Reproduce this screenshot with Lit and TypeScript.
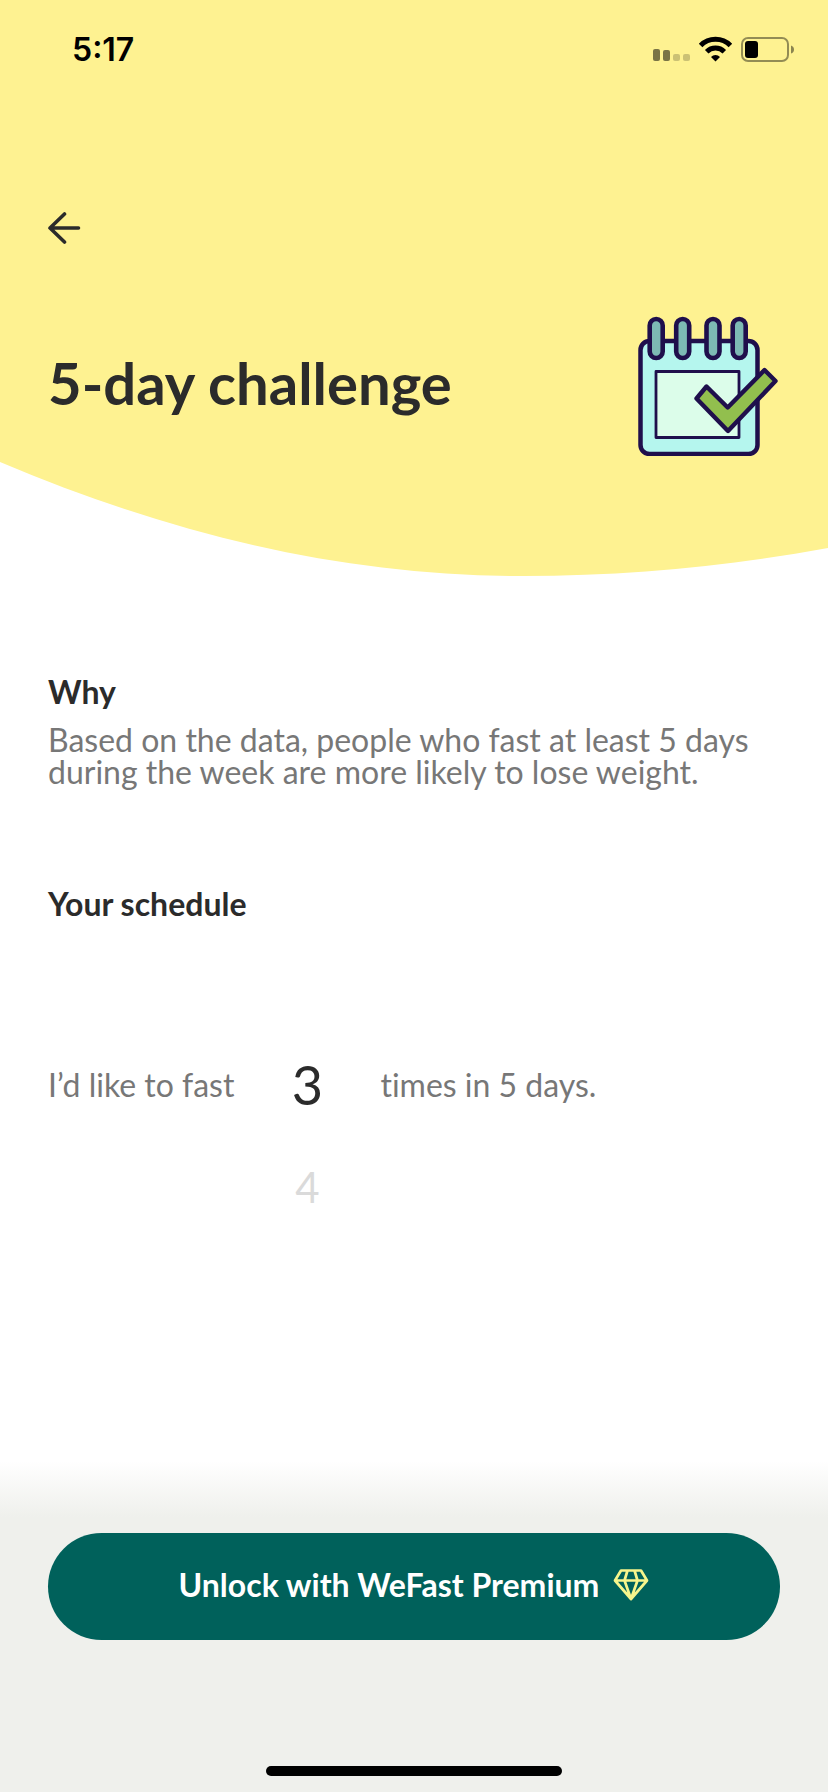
import { LitElement, html, css } from "lit";
import { customElement, state } from "lit/decorators.js";
import { classMap } from "lit/directives/class-map.js";

@customElement("status-bar")
class StatusBar extends LitElement {
  static styles = css`
    :host {
      display: flex;
      justify-content: space-between;
      align-items: center;
      height: 100px;
      padding: 0 34px 0 72px;
      box-sizing: border-box;
    }
    .time {
      font: 600 32px/32px Inter, sans-serif;
      color: #000;
    }
    .icons {
      display: block;
    }
  `;
  render() {
    return html`
      <span class="time">5:17</span>
      <svg class="icons" width="142" height="28" viewBox="0 0 142 28" aria-label="Signal, Wi-Fi and battery" role="img">
        <g fill="#000">
          <rect x="1" y="13" width="7" height="12" rx="2" opacity=".52" />
          <rect x="11" y="14" width="7" height="11" rx="2" opacity=".52" />
          <rect x="21" y="18" width="7" height="7" rx="2" opacity=".2" />
          <rect x="31" y="18" width="7" height="7" rx="2" opacity=".2" />
        </g>
        <g fill="none" stroke="#000" stroke-width="5">
          <path d="M48.600 9.500 A21 21 0 0 1 78.400 9.500" />
          <path d="M54.700 15.700 A12.500 12.500 0 0 1 72.300 15.700" />
        </g>
        <path d="M63.500 25.500 L59 20.900 A6.500 6.500 0 0 1 68 20.900 Z" fill="#000" />
        <rect x="90" y="2" width="46" height="23" rx="6" fill="none" stroke="#000" stroke-opacity=".42" stroke-width="2" />
        <rect x="93" y="5" width="13" height="17" rx="3" fill="#000" />
        <path d="M139 9.500 Q142 10.500 142 13.500 Q142 16.500 139 17.500 Z" fill="#000" opacity=".45" />
      </svg>
    `;
  }
}

@customElement("calendar-art")
class CalendarArt extends LitElement {
  static styles = css`
    :host {
      display: block;
    }
    svg {
      display: block;
    }
  `;
  render() {
    return html`
      <svg width="140" height="140" viewBox="0 0 140 140" aria-hidden="true">
        <g stroke="#1f0f4c" stroke-linejoin="round">
          <rect x="2.500" y="25" width="117" height="113" rx="9" fill="#b5f6ee" stroke-width="4.500" />
          <rect x="18" y="55.500" width="83" height="66" fill="#dcfdea" stroke-width="2.800" />
          <g fill="#7dbab4" stroke-width="4.600">
            <rect x="11.700" y="3" width="13" height="39" rx="6.500" />
            <rect x="38.200" y="3" width="13" height="39" rx="6.500" />
            <rect x="68.500" y="3" width="13" height="39" rx="6.500" />
            <rect x="94.700" y="3" width="13" height="39" rx="6.500" />
          </g>
          <path d="M58.500 82.500 L68.500 70.500 L89.700 91.500 L126.500 54 L137.500 65 L90 115 Z" fill="#92bf4e" stroke-width="4.400" />
        </g>
      </svg>
    `;
  }
}

@customElement("count-wheel")
class CountWheel extends LitElement {
  static styles = css`
    :host {
      display: block;
    }
    .wheel {
      display: grid;
      grid-auto-rows: 102px;
      margin: 0;
      padding: 0;
      border: 0;
      min-width: 0;
    }
    .item {
      display: flex;
      align-items: center;
      justify-content: center;
      font-size: 42px;
      line-height: 60px;
      color: #dadada;
      cursor: pointer;
    }
    .current {
      font-size: 54px;
      color: #2b2b2b;
    }
    .radio {
      appearance: none;
      width: 0;
      height: 0;
      margin: 0;
      outline: none;
    }
  `;

  @state() private value = 3;

  render() {
    return html`
      <fieldset class="wheel" aria-label="Number of fasts">
        ${[3, 4].map(
          (n) => html`
            <label class=${classMap({ item: true, current: n === this.value })}>
              <input
                class="radio"
                type="radio"
                name="count"
                .checked=${n === this.value}
                @change=${() => (this.value = n)}
              />${n}
            </label>
          `
        )}
      </fieldset>
    `;
  }
}

@customElement("app-root")
class AppRoot extends LitElement {
  static styles = css`
    :host {
      display: flex;
      flex-direction: column;
      min-height: 100vh;
      background: #fff;
      color: #2b2b2b;
      font-family: Lato, "Noto Sans", sans-serif;
      font-size: 32px;
      line-height: 32px;
      font-variant-ligatures: none;
    }
    .top {
      background: #fef291;
    }
    .back {
      display: block;
      margin: 104px 0 0 40px;
      padding: 8px;
      border: 0;
      background: none;
      cursor: pointer;
    }
    .back svg {
      display: block;
    }
    .hero {
      display: flex;
      align-items: center;
      justify-content: space-between;
      padding: 64px 50px 6px 48px;
    }
    h1 {
      margin: 0;
      padding-bottom: 6px;
      font-size: 58px;
      line-height: 64px;
      font-weight: 700;
    }
    .curve {
      display: block;
      width: 100%;
      height: 114px;
    }
    main {
      padding: 100px 48px 40px;
    }
    h2 {
      margin: 0;
      font-size: 32px;
      line-height: 32px;
      font-weight: 700;
    }
    .why {
      margin: 16px 0 100px;
      color: #777;
    }
    .schedule {
      display: grid;
      grid-template-columns: auto 146px auto;
      justify-content: start;
      margin-top: 114px;
      color: #777;
    }
    .words {
      display: flex;
      align-items: center;
      height: 102px;
    }
    footer {
      display: flex;
      flex-direction: column;
      margin-top: auto;
      padding: 72px 48px 16px;
      background: linear-gradient(#fff, #eff0ec 56px);
    }
    .unlock {
      display: flex;
      align-items: center;
      justify-content: center;
      gap: 14px;
      height: 107px;
      padding: 0 24px 4px;
      border: 0;
      border-radius: 54px;
      background: #00615b;
      color: #fff;
      font: inherit;
      font-weight: 700;
      cursor: pointer;
    }
    .home {
      align-self: center;
      width: 296px;
      height: 10px;
      margin-top: 126px;
      border-radius: 5px;
      background: #000;
    }
  `;

  render() {
    return html`
      <header>
        <div class="top">
          <status-bar></status-bar>
          <button class="back" aria-label="Back">
            <svg width="33" height="32" viewBox="0 0 33 32">
              <path
                d="M16.500 2 L2 16 L16.500 30 M2 16 H30.500"
                fill="none"
                stroke="#2b2b2b"
                stroke-width="3.600"
                stroke-linecap="round"
                stroke-linejoin="round"
              />
            </svg>
          </button>
          <div class="hero">
            <h1>5-day challenge</h1>
            <calendar-art></calendar-art>
          </div>
        </div>
        <svg class="curve" viewBox="0 0 828 114" preserveAspectRatio="none" aria-hidden="true">
          <path d="M0 0 C180 76 350 114 523 114 C630 114 730 104 828 86 V0 Z" fill="#fef291" />
        </svg>
      </header>
      <main>
        <h2>Why</h2>
        <p class="why">
          Based on the data, people who fast at least 5 days during the week are more likely to lose weight.
        </p>
        <h2>Your schedule</h2>
        <div class="schedule">
          <span class="words">I’d like to fast</span>
          <count-wheel></count-wheel>
          <span class="words">times in 5 days.</span>
        </div>
      </main>
      <footer>
        <button class="unlock">
          Unlock with WeFast Premium
          <svg width="36" height="34" viewBox="0 0 36 34" aria-hidden="true">
            <path
              d="M8 2.500 H28 L34 12.500 L18 31 L2 12.500 Z M2 12.500 H34 M14.500 2.500 L11.500 12.500 L18 31 L24.500 12.500 L21.500 2.500"
              fill="none"
              stroke="#f6f58c"
              stroke-width="2.700"
              stroke-linejoin="round"
            />
          </svg>
        </button>
        <div class="home"></div>
      </footer>
    `;
  }
}
